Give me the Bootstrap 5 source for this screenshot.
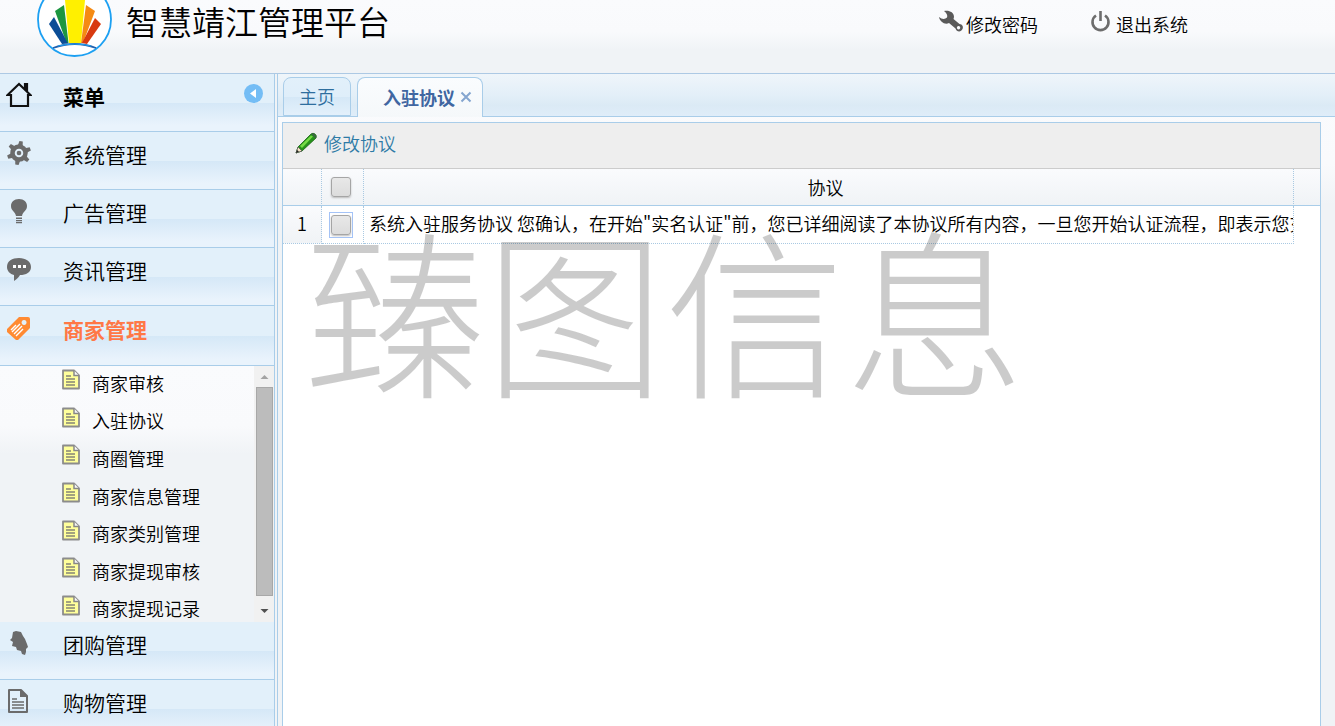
<!DOCTYPE html>
<html lang="zh-CN">
<head>
<meta charset="utf-8">
<meta name="viewport" content="width=device-width, initial-scale=1">
<title>智慧靖江管理平台</title>
<link href="https://cdn.jsdelivr.net/npm/bootstrap@5.3.0/dist/css/bootstrap.min.css" rel="stylesheet">
<style>
:root{--line:#a9cde9;--panel:linear-gradient(#fafbfd,#f9fafc 90px,#f0f3f6 130px)}
body{font-family:"Noto Sans CJK SC",sans-serif;font-weight:350;font-size:18px;line-height:24px;color:#000;background:#f0f3f6;overflow:hidden}
a{color:inherit;text-decoration:none}
.top-bar{height:74px;background:linear-gradient(#fafbfd,#f9fafc 32px,#f0f3f6 50px);padding-left:37px;padding-right:147px}
.site-name{font-size:33px;line-height:42px;font-weight:350;margin:0 0 0 14px}
.top-links{gap:52px}
.top-links svg{margin-left:-2px;margin-right:2px}
.page-body{border-top:1px solid #adc9e4;margin-top:-1px}
.side{width:275px;border-right:1px solid var(--line);background:#f0f3f6}
.menu-row{height:58px;border-bottom:1px solid var(--line);background:linear-gradient(#e2f0fa,#e2f0fa 50%,#d5e8f7 51%,#e9f3fc 90%);font-size:21px;line-height:44px;gap:31px;padding-left:6px;padding-right:11px}
.menu-row svg{width:26px;height:26px;margin-top:8px;flex:none}
.menu-row.current{height:60px;color:#ff7846;font-weight:700;line-height:46px}
.menu-row.current svg{margin-top:9px}
.menu-title{font-weight:700}
.collapse-btn{width:19px;height:19px;border-radius:50%;background:#74bdf5;border:0;padding:0;margin-top:10px}
.menu-row .collapse-btn svg{width:19px;height:19px;margin:0;display:block}
.sub-wrap{height:256px;background:linear-gradient(#fafbfd,#f9fafc 60px,#f0f3f6 88px);overflow:hidden}
.sub-list{height:263px;padding-left:60px;margin-top:-2px}
.sub-list a{gap:11px}
.sub-list svg{width:21px;height:21px;margin-bottom:6px}
.bar-track{width:20px;background:#f1f1f1;padding:0 1px 0 2px}
.bar-thumb{background:#bcbcbc;border:1px solid #a8a8a8}
.bar-end{height:21px;flex:none}
.bar-end.low{height:26px}
.work{margin-left:2px;border-left:1px solid var(--line);min-width:0;background:var(--panel)}
.tab-strip{height:43px;border-bottom:1px solid var(--line);background:linear-gradient(#eff5fa,#e3eff8 50%,#dbeaf5 75%,#dfedf9);padding:3px 5px 0;gap:6px}
.tab-item{border:1px solid var(--line);border-radius:8px 8px 0 0;height:39px;color:#2e6e9e;background:linear-gradient(#e2f0fa,#dfeefa 50%,#d5e8f7 51%,#e3f0fb);padding:0 16px 0 15px;line-height:36px;width:68px;white-space:nowrap}
.tab-item.current{width:auto;height:40px;border-bottom:0;background:linear-gradient(#fafcfe,#f5f8fa);color:#4066a1;font-weight:700;padding:0 10px 2px 25px;gap:5px}
.tab-close{border:0;background:none;padding:0;line-height:0}
.sheet{margin:5px 14px 0 4px;border:1px solid var(--line);border-bottom:0;background:#fff;min-height:0}
.tool-row{height:46px;background:#eee;border-bottom:1px solid #ccc;padding-left:12px;color:#2e7ba6}
.tool-row button{border:0;background:none;padding:0 0 6px;color:inherit;font-weight:350;gap:7px}
.grid-table{width:100%;table-layout:fixed;border-collapse:separate;border-spacing:0}
.grid-table th,.grid-table td{height:37px;padding:0 5px;font-weight:350;white-space:nowrap;overflow:hidden;border-right:1px dotted #a9c9e2}
.grid-table th{background:linear-gradient(#fafbfd,#f0f3f6);border-bottom:1px solid var(--line);text-align:center;padding-right:11px}
.grid-table td{height:38px;border-bottom:1px dotted #a9c9e2;padding-bottom:3px}
.grid-table th:last-child{border-right:0}
.grid-table td:last-child{border:0}
.grid-table td:nth-child(3){padding-right:0}
.grid-table .pick{padding:0 4px 0 0;text-align:center;line-height:0}
.num-col{width:39px;background:linear-gradient(#fafbfd,#f0f3f6)}
.pick-col{width:42px}
.end-col{width:26px}
.grid-table input{appearance:none;width:20px;height:20px;border:1px solid #a5a5a5;border-radius:3px;background:linear-gradient(#e8e8e8,#dcdcdc);box-shadow:0 1px 2px #bbb;margin:0;vertical-align:middle}
.grid-table .ring{display:inline-block;border:1px solid #a4c3f7;padding:2px 1px}
.stamp{top:63px;left:22px;font-size:180px;line-height:240px;font-weight:300;color:#000;opacity:.2;white-space:nowrap;pointer-events:none}
</style>
</head>
<body>
<svg width="0" height="0" class="position-absolute" aria-hidden="true">
<symbol id="note" viewBox="0 0 21 21"><path d="M3 1.500h11l5 5v13H3z" fill="#ffff9b" stroke="#8c8c8c" stroke-width="1.800" stroke-linejoin="round"/><path d="M14 1.500v5h5" fill="#f8f8f8" stroke="#888" stroke-width="1.500"/><path d="M6 7h5M6 10h9M6 13h9M6 16h9" stroke="#858575" stroke-width="1.400"/></symbol>
</svg>
<div class="d-flex flex-column vh-100">
<header class="top-bar d-flex justify-content-between align-items-start flex-shrink-0">
  <div class="d-flex">
    <svg width="75" height="58" viewBox="37 0 75 58" aria-hidden="true">
      <circle cx="74.500" cy="19.500" r="36.500" fill="#fff" stroke="#1da0f2" stroke-width="1.800"/>
      <path d="M65 0h20l-4 43H69z" fill="#fff000"/>
      <path d="M55 11l9-6 4.500 38h-2z" fill="#1c9640"/>
      <path d="M86 5l9 6-12 32h-2z" fill="#f58a13"/>
      <path d="M49 24l5-7 14 26.500-6 .5z" fill="#0b4d96"/>
      <path d="M95 18l6 6-14 20-5-1z" fill="#d83a10"/>
      <path d="M53 48q22-8 43 0" fill="none" stroke="#2362ad" stroke-width="1.800"/><path d="M58 46q17-4 33 0" fill="none" stroke="#1da0f2" stroke-width="1"/>
    </svg>
    <h1 class="site-name">智慧靖江管理平台</h1>
  </div>
  <nav class="top-links d-flex pt-2">
    <a href="#" class="d-flex"><svg width="26" height="26" viewBox="0 0 26 26" aria-hidden="true"><path fill="#5a5a5a" fill-rule="evenodd" d="M6 3c5-1 10 1 10 6l-.5 2 6 5c3 .2 4 3 3 5-1.500 3.500-6 3-7-.5L11 15c-4 2-9-1-10-6 3 2.500 6 2.500 8 .5 1-2-.5-4.500-3-6.500zM20.500 18a1.700 1.700 0 1 0 .1 0z"/></svg><span class="mt-1">修改密码</span></a>
    <a href="#" class="d-flex"><svg width="26" height="26" viewBox="0 0 26 26" fill="none" stroke="#6d6d6d" stroke-width="2.600" aria-hidden="true"><path d="M8 7.500a8 8 0 1 0 9 0"/><path d="M12.500 3v10"/></svg><span class="mt-1">退出系统</span></a>
  </nav>
</header>
<div class="page-body d-flex flex-grow-1 overflow-hidden">
  <aside class="side flex-shrink-0">
    <div class="menu-row menu-title d-flex align-items-start">
      <svg viewBox="0 0 26 26" fill="none" stroke="#111" stroke-width="2.200" aria-hidden="true"><path d="M1.500 13H5v11h17V13h2.500L13 2zM19 7V2h2v7"/></svg>
      <span>菜单</span>
      <button class="collapse-btn ms-auto" aria-label="收起菜单"><svg viewBox="0 0 19 19"><path d="M12 5v9L6 9.500z" fill="#fff"/></svg></button>
    </div>
    <a href="#" class="menu-row d-flex align-items-start"><svg viewBox="0 0 26 26" aria-hidden="true"><g fill="#6b6b6b" transform="rotate(10 13 13)"><path id="tooth" d="M10.500 6l.8-5h3.400l.8 5z"/><use href="#tooth" transform="rotate(60 13 13)"/><use href="#tooth" transform="rotate(120 13 13)"/><use href="#tooth" transform="rotate(180 13 13)"/><use href="#tooth" transform="rotate(240 13 13)"/><use href="#tooth" transform="rotate(300 13 13)"/></g><circle cx="13" cy="13" r="6.500" fill="none" stroke="#6b6b6b" stroke-width="4.500"/><circle cx="13" cy="13" r="2.300" fill="#6b6b6b"/></svg><span>系统管理</span></a>
    <a href="#" class="menu-row d-flex align-items-start"><svg viewBox="0 0 26 26" fill="#6b6b6b" aria-hidden="true"><path d="M13 1c5 0 8 3 8 7 0 5-4 5-5 10h-6C9 13 5 13 5 8c0-4 3-7 8-7zM10 19.500h6V21h-6zM10 22h6v1.300h-6zM10 24h6v1.200h-6z"/></svg><span>广告管理</span></a>
    <a href="#" class="menu-row d-flex align-items-start"><svg viewBox="0 0 26 26" aria-hidden="true"><path fill="#6b6b6b" d="M13 2c7 0 12 3.500 12 9s-5 8-11 8c-1 2-3 4-6 6v-6c-4-1-7-4-7-8 0-6 5-9 12-9z"/><path fill="#fff" d="M7 9h3v3H7zM12 9h3v3h-3zM17 9h3v3h-3z"/></svg><span>资讯管理</span></a>
    <a href="#" class="menu-row current d-flex align-items-start"><svg viewBox="0 0 26 26" aria-hidden="true"><path fill="#ff8a32" fill-rule="evenodd" d="M13 2h9q2 0 2 2v9L12 25H10L1 17v-3zM18 5a2.500 2.500 0 1 0 .1 0z"/><path stroke="#fff" stroke-width="1.400" d="M5 15l5-5M6 17l8-8M8 19l8-8M10 21l7-7"/></svg><span>商家管理</span></a>
    <div class="sub-wrap d-flex">
      <nav class="sub-list d-flex flex-column flex-grow-1">
        <a href="#" class="d-flex flex-fill align-items-center"><svg><use href="#note"/></svg>商家审核</a>
        <a href="#" class="d-flex flex-fill align-items-center"><svg><use href="#note"/></svg>入驻协议</a>
        <a href="#" class="d-flex flex-fill align-items-center"><svg><use href="#note"/></svg>商圈管理</a>
        <a href="#" class="d-flex flex-fill align-items-center"><svg><use href="#note"/></svg>商家信息管理</a>
        <a href="#" class="d-flex flex-fill align-items-center"><svg><use href="#note"/></svg>商家类别管理</a>
        <a href="#" class="d-flex flex-fill align-items-center"><svg><use href="#note"/></svg>商家提现审核</a>
        <a href="#" class="d-flex flex-fill align-items-center"><svg><use href="#note"/></svg>商家提现记录</a>
      </nav>
      <div class="bar-track d-flex flex-column" aria-hidden="true">
        <svg class="bar-end" viewBox="0 0 17 21"><path d="M4.500 13h8l-4-4z" fill="#a3a3a3"/></svg>
        <div class="bar-thumb flex-grow-1"></div>
        <svg class="bar-end low" viewBox="0 0 17 26"><path d="M4.500 13h8l-4 4z" fill="#505050"/></svg>
      </div>
    </div>
    <a href="#" class="menu-row d-flex align-items-start"><svg viewBox="0 0 26 26" fill="#6b6b6b" aria-hidden="true"><path d="M7 2l3-1 5 1 2 4 2 3 2 5 1 3-2 2v3l-1 3-3-1-1-3-4-1-1-3-4-1 1-4-3-2 2-2z"/></svg><span>团购管理</span></a>
    <a href="#" class="menu-row d-flex align-items-start"><svg viewBox="0 0 26 26" fill="none" stroke="#6b6b6b" aria-hidden="true"><path stroke-width="2" stroke-linejoin="round" d="M3 2h12l6 6v16H3z"/><path fill="#6b6b6b" stroke="none" d="M14 1l8 8h-8z"/><path stroke-width="1.600" d="M6 11h5M6 14h12M6 17h12M6 20h12"/></svg><span>购物管理</span></a>
  </aside>
  <main class="work d-flex flex-column flex-grow-1">
    <nav class="tab-strip d-flex align-items-start flex-shrink-0">
      <a href="#" class="tab-item">主页</a>
      <div class="tab-item current d-flex align-items-center"><a href="#">入驻协议</a><button class="tab-close" aria-label="关闭"><svg width="12" height="12" viewBox="0 0 12 12"><path d="M1.500 1.500l9 9m0-9l-9 9" stroke="#85a5cf" stroke-width="2"/></svg></button></div>
    </nav>
    <section class="sheet position-relative flex-grow-1 overflow-hidden">
      <div class="tool-row d-flex align-items-center">
        <button class="d-flex align-items-center"><svg width="22" height="22" viewBox="0 0 22 22" aria-hidden="true"><path d="M1 21l2-6L16 2q2-1.500 4 0t1 4L7 19z" fill="#26931a" stroke="#176213" stroke-width=".8"/><path d="M5 14L16 3.500l2 1L7 16z" fill="#75db46"/><path d="M1 21l2-6 4 4z" fill="#f6e5c5" stroke="#555" stroke-width=".7"/><path d="M1 21l1-3 2 1.500z" fill="#222"/><path d="M16.500 2l2-1 3 4-1 1.500z" fill="#3c6545"/></svg>修改协议</button>
      </div>
      <table class="grid-table">
        <colgroup><col class="num-col"><col class="pick-col"><col><col class="end-col"></colgroup>
        <thead><tr><th></th><th class="pick"><input type="checkbox" aria-label="全选"></th><th>协议</th><th></th></tr></thead>
        <tbody><tr><td class="num-col text-center">1</td><td class="pick"><span class="ring"><input type="checkbox" aria-label="选择第1行"></span></td><td>系统入驻服务协议 您确认，在开始"实名认证"前，您已详细阅读了本协议所有内容，一旦您开始认证流程，即表示您充</td><td></td></tr></tbody>
      </table>
      <div class="stamp position-absolute">臻图信息</div>
    </section>
  </main>
</div>
</div>
<script src="https://cdn.jsdelivr.net/npm/bootstrap@5.3.0/dist/js/bootstrap.bundle.min.js"></script>
</body>
</html>
